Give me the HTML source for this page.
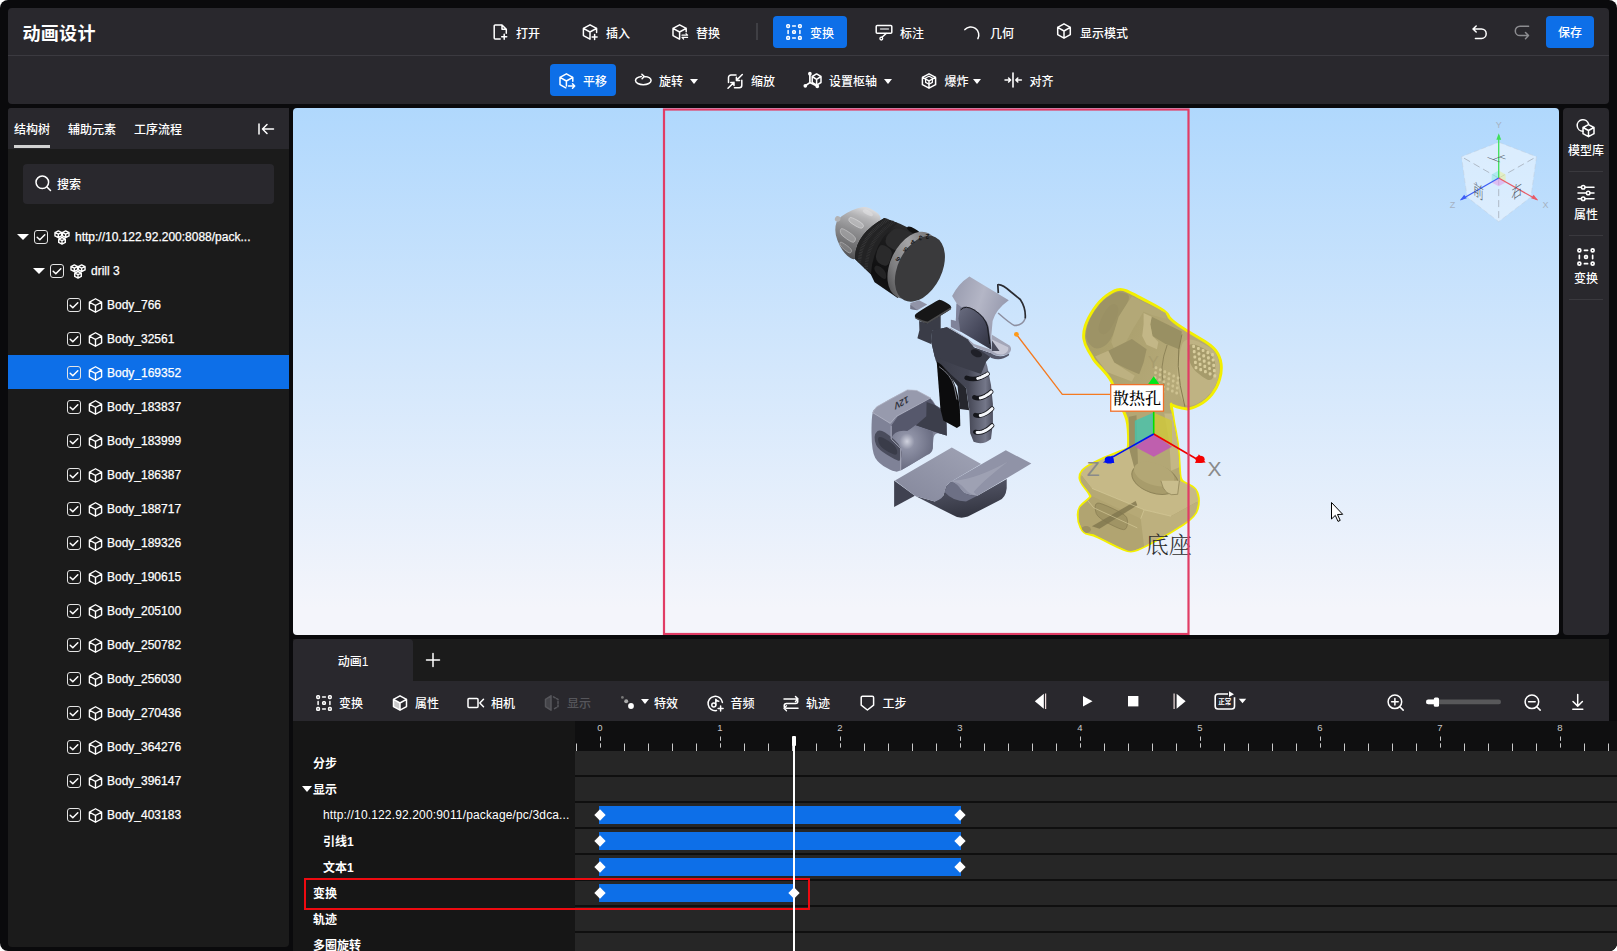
<!DOCTYPE html>
<html lang="zh-CN">
<head>
<meta charset="utf-8">
<title>动画设计</title>
<style>
*{box-sizing:border-box;margin:0;padding:0}
html,body{width:1617px;height:951px;overflow:hidden;background:#fff}
body{font-family:"Liberation Sans","Noto Sans CJK SC",sans-serif;font-size:12px;color:#fff;position:relative;font-weight:500}
.abs{position:absolute}
#frame{position:absolute;left:0;top:0;width:1617px;height:951px;background:#0a0a0c;border-radius:8px;overflow:hidden}
#hdr{position:absolute;left:8px;top:8px;width:1601px;height:96px;background:#29282d;border-radius:4px}
#hdr .sep{position:absolute;left:0;top:47px;width:100%;height:1px;background:#3b3a40}
#title{position:absolute;left:14.500px;top:11.500px;font-size:18px;font-weight:bold;line-height:28px;letter-spacing:.3px}
.tb{position:absolute;height:32px;line-height:32px;font-size:12px;white-space:nowrap;border-radius:4px}
.tb svg{position:absolute;left:0;top:0}
.tb span{position:absolute;top:1.500px}
.blue{background:#0d6fe8}
.caret{position:absolute;top:14.500px;width:0;height:0;border-left:4px solid transparent;border-right:4px solid transparent;border-top:5px solid #fff}
svg{overflow:visible}
.ic{fill:none;stroke:#fff;stroke-width:1.5;stroke-linecap:round;stroke-linejoin:round}
/* left */
#left{position:absolute;left:8px;top:108px;width:281px;height:839px;background:#1b1b1b;border-radius:3px 0 4px 4px;overflow:hidden}
#ltabs{position:absolute;left:0;top:0;width:100%;height:41px;background:#29282d}
#ltabs span{position:absolute;top:0;line-height:44px;font-size:12px}
#search{position:absolute;left:15px;top:56px;width:251px;height:40px;background:#29282d;border-radius:4px}
.row{position:absolute;left:0;width:281px;height:34px;line-height:34px;font-size:12px}
.row.sel{background:#0d6fe8}
.row span{position:absolute;top:1px;-webkit-text-stroke:.25px #fff}
.row svg{position:absolute}
.cb{position:absolute;top:10.500px;width:14px;height:14px;border:1.100px solid #e4e4e4;border-radius:3px}
.cb svg{left:-1px;top:-1px}
.tri{position:absolute;top:15px;width:0;height:0;border-left:6px solid transparent;border-right:6px solid transparent;border-top:6.500px solid #fff}
/* viewport */
#vp{position:absolute;left:293px;top:108px;width:1266px;height:527px;border-radius:4px;overflow:hidden;background:linear-gradient(#b0d8fd 0%,#f4f5fb 95%)}
#right{position:absolute;left:1563px;top:108px;width:46px;height:527px;background:#29282d;border-radius:4px}
/* timeline */
#tl{position:absolute;left:293px;top:639px;width:1324px;height:312px}
#tltabs{position:absolute;left:0;top:0;width:1316px;height:42px;background:#1b1b1b}
#tltab1{position:absolute;left:0;top:0;width:120px;height:42px;background:#29282d;border-radius:4px 4px 0 0;line-height:46px;text-align:center;font-size:12px}
#tlbar{position:absolute;left:0;top:42px;width:1316px;height:40px;background:#29282d}
#ruler{position:absolute;left:282px;top:82px;width:1042px;height:30px;background:#0f0f10}
.trk{position:absolute;left:282px;width:1042px;height:24px;background:#262626}
.lbl{position:absolute;font-size:12px;line-height:30.500px;white-space:nowrap;font-weight:bold}
.bar{position:absolute;height:18px;background:#0d6fe8}

.rl{position:absolute;left:0;width:46px;text-align:center;font-size:12px;line-height:20px}
.rs{position:absolute;left:6px;width:34px;height:1px;background:#3a393e}
.ti{position:absolute;top:0;height:40px;line-height:46px;font-size:12px;white-space:nowrap}
.ti svg{position:absolute;left:0;top:13.500px}
.ti span{position:absolute;top:0}
.lbl.sub{font-weight:bold}
.lbl.en{font-weight:normal;letter-spacing:.15px;line-height:28px}
.tri2{position:absolute;width:0;height:0;border-left:5.500px solid transparent;border-right:5.500px solid transparent;border-top:6px solid #fff}
.dm{position:absolute;width:8px;height:8px;background:#fff;transform:rotate(45deg)}
</style>
</head>
<body>
<div id="frame">
<div id="hdr"><div class="sep"></div><div id="title">动画设计</div>
<!-- top toolbar (coords relative to hdr: subtract 8) -->
<div class="tb" style="left:476px;top:8px;width:68px"><svg width="16" height="16" viewBox="0 0 16 16" style="left:9px;top:8px" class="ic"><path d="M7.2 15H2.2a1 1 0 0 1-1-1V2a1 1 0 0 1 1-1H9l4.3 4.3V9.2M9 1v4.3h4.3M11.2 10.2v5M8.7 12.7h5"/></svg><span style="left:32px">打开</span></div>
<div class="tb" style="left:566px;top:8px;width:68px"><svg width="16" height="16" viewBox="0 0 16 16" style="left:8px;top:8px" class="ic"><path d="M8 15.2L1.4 11.6V4.4L8 .8l6.6 3.6v4.2M1.4 4.4L8 8l6.6-3.600M8 8v7.200M12.600 10.400v5M10.100 12.900h5"/></svg><span style="left:32px">插入</span></div>
<div class="tb" style="left:656px;top:8px;width:68px"><svg width="16" height="16" viewBox="0 0 16 16" style="left:8px;top:8px" class="ic"><path d="M7.400 15.200L1 11.600V4.400L7.600 .8l6.600 3.600v3.400M1 4.400L7.600 8l6.600-3.600M7.600 8v7"/><path d="M10 11.200h5.600l-1.600-1.600M15.600 13.400H10l1.600 1.600" stroke-width="1.200"/></svg><span style="left:32px">替换</span></div>
<div class="abs" style="left:748px;top:15px;width:2px;height:17px;background:#3f3f44"></div>
<div class="tb blue" style="left:765px;top:8px;width:74px"><svg width="16" height="16" viewBox="0 0 16 16" style="left:13px;top:8px" class="ic" stroke-width="1.400"><rect x=".8" y=".8" width="2.600" height="2.600" rx=".8"/><rect x="12.600" y=".8" width="2.600" height="2.600" rx=".8"/><rect x=".8" y="12.600" width="2.600" height="2.600" rx=".8"/><rect x="12.600" y="12.600" width="2.600" height="2.600" rx=".8"/><rect x="6.700" y="6.700" width="2.600" height="2.600" rx=".8"/><path d="M6.600 2.100h2.800M6.600 13.900h2.800M2.100 6.600v2.800M13.900 6.600v2.800"/></svg><span style="left:37px">变换</span></div>
<div class="tb" style="left:860px;top:8px;width:68px"><svg width="18" height="16" viewBox="0 0 18 16" style="left:7px;top:8px" class="ic"><rect x="1.200" y="1.500" width="15.600" height="7.700" rx="1"/><path d="M5.500 5h8" stroke="#c4c4c6" stroke-width="1.300"/><path d="M11.200 9.500L7 13.300"/><circle cx="6.300" cy="14.600" r="1.400" stroke-width="1.300"/></svg><span style="left:32px">标注</span></div>
<div class="tb" style="left:950px;top:8px;width:68px"><svg width="16" height="16" viewBox="0 0 16 16" style="left:6px;top:8px" class="ic"><path d="M.9 5.600A8 8 0 0 1 13.900 14.700"/></svg><span style="left:32px">几何</span></div>
<div class="tb" style="left:1040px;top:8px;width:92px"><svg width="16" height="16" viewBox="0 0 16 16" style="left:8px;top:7px" class="ic"><path d="M8 15.200L1.700 11.600V4.400L8 .8l6.300 3.600v7.200zM1.700 4.400L8 8l6.300-3.600M8 8v7.200"/></svg><span style="left:32px">显示模式</span></div>
<svg class="abs ic" width="16" height="16" viewBox="0 0 16 16" style="left:1464px;top:17px" stroke-width="1.600"><path d="M4.200 1L1 4l3.200 3M1.200 4h8.300a4.700 4.700 0 0 1 0 9.400H3.400"/></svg>
<svg class="abs ic" width="16" height="16" viewBox="0 0 16 16" style="left:1506px;top:17px;stroke:#8c8c90" stroke-width="1.400"><path d="M14.600 1.200H6a4.700 4.700 0 0 0 0 9.400h8.300M11.500 7.500l3 3.100-3 3.100"/></svg>
<div class="tb blue" style="left:1538px;top:8px;width:48px;text-align:center;font-weight:500;line-height:35.500px">保存</div>
<!-- second toolbar -->
<div class="tb blue" style="left:542px;top:56px;width:66px"><svg width="16" height="16" viewBox="0 0 16 16" style="left:9px;top:8.500px" class="ic"><path d="M6.800 14.800L1 11.600V4.400L7.400 .8l6.400 3.600v3.800M1 4.400L7.400 8l6.400-3.600M7.400 8v5"/><path d="M9.500 13h6M13.500 10.800l2.200 2.200-2.200 2.200"/></svg><span style="left:33px">平移</span></div>
<div class="tb" style="left:617.500px;top:56px;width:80px"><svg width="20" height="16" viewBox="0 0 20 16" style="left:8px;top:8px" class="ic"><path d="M7.300 4.500C3.600 5 1.500 6.600 1.500 8.600c0 2.300 3.500 4.100 7.800 4.100s7.800-1.800 7.800-4.100c0-2.100-2.800-3.700-6.800-4M7.900 2.200l2.200 2.200-2 2.300"/></svg><span style="left:33.500px">旋转</span><i class="caret" style="left:64.800px"></i></div>
<div class="tb" style="left:711px;top:56px;width:60px"><svg width="17" height="18" viewBox="0 0 17 18" style="left:8px;top:8px" class="ic" stroke-width="1.400"><path d="M9 3H4a2.500 2.500 0 0 0-2.500 2.500v5M7.500 15.800h4.800a2.500 2.500 0 0 0 2.500-2.500V8.300M15.300 2.500L9.400 8.400M9.400 5.200v3.200h3.200M1 16.300l6-5.900M3.800 10.400H7v3.200"/></svg><span style="left:32px">缩放</span></div>
<div class="tb" style="left:788px;top:56px;width:100px"><svg width="18" height="16" viewBox="0 0 18 16" style="left:8px;top:8px" class="ic" stroke-width="1.200"><path d="M12.600 1.900L17 4.500v6l-4.400 2.700-4.400-2.700v-6zM8.200 4.500l4.400 2.800L17 4.500M12.600 7.300v5.900"/><path d="M5.900 1.700v8.900L1.300 13.800M5.900 10.600l7.400 3.700" stroke-width="1.700"/><circle cx="1.300" cy="13.800" r="1.100" fill="#fff"/><circle cx="13.300" cy="14.300" r="1.100" fill="#fff"/><circle cx="5.900" cy="1.700" r="1.100" fill="#fff"/></svg><span style="left:33px">设置枢轴</span><i class="caret" style="left:87.600px"></i></div>
<div class="tb" style="left:905px;top:56px;width:70px"><svg width="16" height="16" viewBox="0 0 16 16" style="left:8px;top:9px" class="ic"><path d="M8 .8l6.600 3.500v7.400L8 15.200 1.400 11.700V4.300zM1.400 4.300L8 7.800l6.600-3.500M8 7.800v7.400"/><path d="M8 3.200L4.600 5v4.400M8 3.200L11.400 5v4.400M4.600 9.400L8 11.200l3.400-1.800" stroke-width="1.200"/></svg><span style="left:31.500px">爆炸</span><i class="caret" style="left:59.600px"></i></div>
<div class="tb" style="left:992px;top:56px;width:60px"><svg width="18" height="16" viewBox="0 0 18 16" style="left:4px;top:8px" class="ic" stroke-width="1.300"><path d="M9 1v14" stroke-width="1.600"/><path d="M1 8h5.600M4.600 6l2 2-2 2M17.400 8h-5.600M13.800 6l-2 2 2 2"/></svg><span style="left:29.500px">对齐</span></div>
</div>
<div id="left"><div id="ltabs"><span style="left:6px">结构树</span><span style="left:60px">辅助元素</span><span style="left:126px">工序流程</span><div class="abs" style="left:6px;top:37px;width:36px;height:3px;background:#d2d2d2"></div>
<svg class="abs ic" width="16" height="12" viewBox="0 0 16 12" style="left:249.500px;top:15px" stroke-width="1.500"><path d="M1 1v10M4.500 6h11M9 1.500L4.500 6 9 10.500"/></svg></div>
<div id="search"><svg class="abs ic" width="17" height="17" viewBox="0 0 17 17" style="left:11.500px;top:10.800px" stroke-width="1.500"><circle cx="7.300" cy="7.300" r="6.300"/><path d="M12 12l3.500 3.500"/></svg><span class="abs" style="left:34px;top:1px;line-height:40px;font-size:12px">搜索</span></div>
<div class="row" style="top:111px"><i class="tri" style="left:9px"></i><i class="cb" style="left:26px"><svg width="14" height="14" viewBox="0 0 14 14" class="ic" stroke-width="1.100"><path d="M3.200 7.200l2.600 2.500 5-5"/></svg></i><svg width="16" height="15" viewBox="0 0 17 16" style="left:46px;top:10.500px" class="ic" stroke-width="1"><path d="M4.600 1l3.500 1.700v3.600L4.600 8 1 6.300V2.700zM1 2.700l3.600 1.700 3.500-1.700M4.600 4.400V8"/><path d="M12.400 1l3.600 1.700v3.600L12.400 8 8.900 6.300V2.700zM8.900 2.700l3.500 1.700 3.600-1.700M12.400 4.400V8"/><path d="M8.500 8l3.500 1.700v3.600L8.500 15 5 13.300V9.700zM5 9.700l3.500 1.700 3.500-1.700M8.500 11.400V15"/></svg><span style="left:67px">http://10.122.92.200:8088/pack...</span></div>
<div class="row" style="top:145px"><i class="tri" style="left:25px"></i><i class="cb" style="left:42px"><svg width="14" height="14" viewBox="0 0 14 14" class="ic" stroke-width="1.100"><path d="M3.200 7.200l2.600 2.500 5-5"/></svg></i><svg width="16" height="15" viewBox="0 0 17 16" style="left:62px;top:10.500px" class="ic" stroke-width="1"><path d="M4.600 1l3.500 1.700v3.600L4.600 8 1 6.300V2.700zM1 2.700l3.600 1.700 3.500-1.700M4.600 4.400V8"/><path d="M12.400 1l3.600 1.700v3.600L12.400 8 8.900 6.300V2.700zM8.900 2.700l3.500 1.700 3.600-1.700M12.400 4.400V8"/><path d="M8.500 8l3.500 1.700v3.600L8.500 15 5 13.300V9.700zM5 9.700l3.500 1.700 3.500-1.700M8.500 11.400V15"/></svg><span style="left:83px">drill 3</span></div>
<div class="row" style="top:179px"><i class="cb" style="left:59px"><svg width="14" height="14" viewBox="0 0 14 14" class="ic" stroke-width="1.100"><path d="M3.200 7.200l2.600 2.500 5-5"/></svg></i><svg width="15" height="15" viewBox="0 0 16 16" style="left:79.500px;top:10.500px" class="ic" stroke-width="1.100"><path d="M8 15.200L1.500 11.600V4.400L8 .8l6.500 3.600v7.200zM1.500 4.400L8 8l6.500-3.600M8 8v7.200"/></svg><span style="left:99px">Body_766</span></div>
<div class="row" style="top:213px"><i class="cb" style="left:59px"><svg width="14" height="14" viewBox="0 0 14 14" class="ic" stroke-width="1.100"><path d="M3.200 7.200l2.600 2.500 5-5"/></svg></i><svg width="15" height="15" viewBox="0 0 16 16" style="left:79.500px;top:10.500px" class="ic" stroke-width="1.100"><path d="M8 15.200L1.500 11.600V4.400L8 .8l6.500 3.600v7.200zM1.500 4.400L8 8l6.500-3.600M8 8v7.200"/></svg><span style="left:99px">Body_32561</span></div>
<div class="row sel" style="top:247px"><i class="cb" style="left:59px"><svg width="14" height="14" viewBox="0 0 14 14" class="ic" stroke-width="1.100"><path d="M3.200 7.200l2.600 2.500 5-5"/></svg></i><svg width="15" height="15" viewBox="0 0 16 16" style="left:79.500px;top:10.500px" class="ic" stroke-width="1.100"><path d="M8 15.200L1.500 11.600V4.400L8 .8l6.500 3.600v7.200zM1.500 4.400L8 8l6.500-3.600M8 8v7.200"/></svg><span style="left:99px">Body_169352</span></div>
<div class="row" style="top:281px"><i class="cb" style="left:59px"><svg width="14" height="14" viewBox="0 0 14 14" class="ic" stroke-width="1.100"><path d="M3.200 7.200l2.600 2.500 5-5"/></svg></i><svg width="15" height="15" viewBox="0 0 16 16" style="left:79.500px;top:10.500px" class="ic" stroke-width="1.100"><path d="M8 15.200L1.500 11.600V4.400L8 .8l6.500 3.600v7.200zM1.500 4.400L8 8l6.500-3.600M8 8v7.200"/></svg><span style="left:99px">Body_183837</span></div>
<div class="row" style="top:315px"><i class="cb" style="left:59px"><svg width="14" height="14" viewBox="0 0 14 14" class="ic" stroke-width="1.100"><path d="M3.200 7.200l2.600 2.500 5-5"/></svg></i><svg width="15" height="15" viewBox="0 0 16 16" style="left:79.500px;top:10.500px" class="ic" stroke-width="1.100"><path d="M8 15.200L1.500 11.600V4.400L8 .8l6.500 3.600v7.200zM1.500 4.400L8 8l6.500-3.600M8 8v7.200"/></svg><span style="left:99px">Body_183999</span></div>
<div class="row" style="top:349px"><i class="cb" style="left:59px"><svg width="14" height="14" viewBox="0 0 14 14" class="ic" stroke-width="1.100"><path d="M3.200 7.200l2.600 2.500 5-5"/></svg></i><svg width="15" height="15" viewBox="0 0 16 16" style="left:79.500px;top:10.500px" class="ic" stroke-width="1.100"><path d="M8 15.200L1.500 11.600V4.400L8 .8l6.500 3.600v7.200zM1.500 4.400L8 8l6.500-3.600M8 8v7.200"/></svg><span style="left:99px">Body_186387</span></div>
<div class="row" style="top:383px"><i class="cb" style="left:59px"><svg width="14" height="14" viewBox="0 0 14 14" class="ic" stroke-width="1.100"><path d="M3.200 7.200l2.600 2.500 5-5"/></svg></i><svg width="15" height="15" viewBox="0 0 16 16" style="left:79.500px;top:10.500px" class="ic" stroke-width="1.100"><path d="M8 15.200L1.500 11.600V4.400L8 .8l6.500 3.600v7.200zM1.500 4.400L8 8l6.500-3.600M8 8v7.200"/></svg><span style="left:99px">Body_188717</span></div>
<div class="row" style="top:417px"><i class="cb" style="left:59px"><svg width="14" height="14" viewBox="0 0 14 14" class="ic" stroke-width="1.100"><path d="M3.200 7.200l2.600 2.500 5-5"/></svg></i><svg width="15" height="15" viewBox="0 0 16 16" style="left:79.500px;top:10.500px" class="ic" stroke-width="1.100"><path d="M8 15.200L1.500 11.600V4.400L8 .8l6.500 3.600v7.200zM1.500 4.400L8 8l6.500-3.600M8 8v7.200"/></svg><span style="left:99px">Body_189326</span></div>
<div class="row" style="top:451px"><i class="cb" style="left:59px"><svg width="14" height="14" viewBox="0 0 14 14" class="ic" stroke-width="1.100"><path d="M3.200 7.200l2.600 2.500 5-5"/></svg></i><svg width="15" height="15" viewBox="0 0 16 16" style="left:79.500px;top:10.500px" class="ic" stroke-width="1.100"><path d="M8 15.200L1.500 11.600V4.400L8 .8l6.500 3.600v7.200zM1.500 4.400L8 8l6.500-3.600M8 8v7.200"/></svg><span style="left:99px">Body_190615</span></div>
<div class="row" style="top:485px"><i class="cb" style="left:59px"><svg width="14" height="14" viewBox="0 0 14 14" class="ic" stroke-width="1.100"><path d="M3.200 7.200l2.600 2.500 5-5"/></svg></i><svg width="15" height="15" viewBox="0 0 16 16" style="left:79.500px;top:10.500px" class="ic" stroke-width="1.100"><path d="M8 15.200L1.500 11.600V4.400L8 .8l6.500 3.600v7.200zM1.500 4.400L8 8l6.500-3.600M8 8v7.200"/></svg><span style="left:99px">Body_205100</span></div>
<div class="row" style="top:519px"><i class="cb" style="left:59px"><svg width="14" height="14" viewBox="0 0 14 14" class="ic" stroke-width="1.100"><path d="M3.200 7.200l2.600 2.500 5-5"/></svg></i><svg width="15" height="15" viewBox="0 0 16 16" style="left:79.500px;top:10.500px" class="ic" stroke-width="1.100"><path d="M8 15.200L1.500 11.600V4.400L8 .8l6.500 3.600v7.200zM1.500 4.400L8 8l6.500-3.600M8 8v7.200"/></svg><span style="left:99px">Body_250782</span></div>
<div class="row" style="top:553px"><i class="cb" style="left:59px"><svg width="14" height="14" viewBox="0 0 14 14" class="ic" stroke-width="1.100"><path d="M3.200 7.200l2.600 2.500 5-5"/></svg></i><svg width="15" height="15" viewBox="0 0 16 16" style="left:79.500px;top:10.500px" class="ic" stroke-width="1.100"><path d="M8 15.200L1.500 11.600V4.400L8 .8l6.500 3.600v7.200zM1.500 4.400L8 8l6.500-3.600M8 8v7.200"/></svg><span style="left:99px">Body_256030</span></div>
<div class="row" style="top:587px"><i class="cb" style="left:59px"><svg width="14" height="14" viewBox="0 0 14 14" class="ic" stroke-width="1.100"><path d="M3.200 7.200l2.600 2.500 5-5"/></svg></i><svg width="15" height="15" viewBox="0 0 16 16" style="left:79.500px;top:10.500px" class="ic" stroke-width="1.100"><path d="M8 15.200L1.500 11.600V4.400L8 .8l6.500 3.600v7.200zM1.500 4.400L8 8l6.500-3.600M8 8v7.200"/></svg><span style="left:99px">Body_270436</span></div>
<div class="row" style="top:621px"><i class="cb" style="left:59px"><svg width="14" height="14" viewBox="0 0 14 14" class="ic" stroke-width="1.100"><path d="M3.200 7.200l2.600 2.500 5-5"/></svg></i><svg width="15" height="15" viewBox="0 0 16 16" style="left:79.500px;top:10.500px" class="ic" stroke-width="1.100"><path d="M8 15.200L1.500 11.600V4.400L8 .8l6.500 3.600v7.200zM1.500 4.400L8 8l6.500-3.600M8 8v7.200"/></svg><span style="left:99px">Body_364276</span></div>
<div class="row" style="top:655px"><i class="cb" style="left:59px"><svg width="14" height="14" viewBox="0 0 14 14" class="ic" stroke-width="1.100"><path d="M3.200 7.200l2.600 2.500 5-5"/></svg></i><svg width="15" height="15" viewBox="0 0 16 16" style="left:79.500px;top:10.500px" class="ic" stroke-width="1.100"><path d="M8 15.200L1.500 11.600V4.400L8 .8l6.500 3.600v7.200zM1.500 4.400L8 8l6.500-3.600M8 8v7.200"/></svg><span style="left:99px">Body_396147</span></div>
<div class="row" style="top:689px"><i class="cb" style="left:59px"><svg width="14" height="14" viewBox="0 0 14 14" class="ic" stroke-width="1.100"><path d="M3.200 7.200l2.600 2.500 5-5"/></svg></i><svg width="15" height="15" viewBox="0 0 16 16" style="left:79.500px;top:10.500px" class="ic" stroke-width="1.100"><path d="M8 15.200L1.500 11.600V4.400L8 .8l6.500 3.600v7.200zM1.500 4.400L8 8l6.500-3.600M8 8v7.200"/></svg><span style="left:99px">Body_403183</span></div>
</div>
<div id="vp"><!--SCENE--><svg id="scene" width="1266" height="527" viewBox="293 108 1266 527" style="position:absolute;left:0;top:0">
<defs><linearGradient id="gchuck" x1="0.6" y1="0" x2="0.3" y2="1"><stop offset="0" stop-color="#dadadc"/><stop offset=".18" stop-color="#b4b4b6"/><stop offset=".45" stop-color="#909092"/><stop offset=".8" stop-color="#6a6a6c"/><stop offset="1" stop-color="#4c4c4e"/></linearGradient><linearGradient id="gblk" x1="0.7" y1="0" x2="0.2" y2="1"><stop offset="0" stop-color="#303031"/><stop offset=".3" stop-color="#1c1c1d"/><stop offset=".7" stop-color="#0f0f10"/><stop offset="1" stop-color="#1a1a1b"/></linearGradient><linearGradient id="gring" x1="0.7" y1="0" x2="0.2" y2="1"><stop offset="0" stop-color="#6a6a6c"/><stop offset=".4" stop-color="#a4a4a6"/><stop offset=".75" stop-color="#7c7c7e"/><stop offset="1" stop-color="#4a4a4c"/></linearGradient><linearGradient id="gsh" x1="0" y1="0.3" x2="1" y2="0.7"><stop offset="0" stop-color="#9a9db0"/><stop offset=".45" stop-color="#b4b6c6"/><stop offset="1" stop-color="#8e91a6"/></linearGradient><linearGradient id="gshd" x1="0" y1="0" x2="1" y2="1"><stop offset="0" stop-color="#6a6d80"/><stop offset=".6" stop-color="#45475a"/><stop offset="1" stop-color="#2e303c"/></linearGradient><linearGradient id="ggrip" x1="0" y1="0" x2="1" y2="0"><stop offset="0" stop-color="#393b46"/><stop offset=".6" stop-color="#454755"/><stop offset=".88" stop-color="#747789"/><stop offset="1" stop-color="#4c4e5e"/></linearGradient><linearGradient id="gbat" x1="0" y1="0" x2="1" y2="1"><stop offset="0" stop-color="#a6a8ba"/><stop offset=".6" stop-color="#8c8fa3"/><stop offset="1" stop-color="#74778c"/></linearGradient><radialGradient id="gcav" cx=".38" cy=".35" r=".6"><stop offset="0" stop-color="#d0d2de"/><stop offset=".3" stop-color="#8e91a5"/><stop offset="1" stop-color="#6c6f84"/></radialGradient><linearGradient id="gplate" x1="0" y1="1" x2="1" y2="0"><stop offset="0" stop-color="#84879b"/><stop offset="1" stop-color="#a0a3b5"/></linearGradient><linearGradient id="gfront" x1="0" y1="0" x2="0.3" y2="1"><stop offset="0" stop-color="#5c5e70"/><stop offset="1" stop-color="#343642"/></linearGradient><linearGradient id="ghs" x1="0" y1="0" x2="1" y2="1"><stop offset="0" stop-color="#a39966"/><stop offset=".5" stop-color="#b5a978"/><stop offset="1" stop-color="#a89c6a"/></linearGradient><linearGradient id="gbtn" x1="0.3" y1="0" x2="0.6" y2="1"><stop offset="0" stop-color="#1c1c1d"/><stop offset=".75" stop-color="#111112"/><stop offset="1" stop-color="#5c5c5e"/></linearGradient></defs>
<path d="M877.6,224.6 Q884.3,218.0 876.4,212.2 Q868.5,206.5 863.1,207.1 Q857.6,207.7 851.6,210.4 Q845.6,213.1 841.6,216.2 Q837.7,219.2 836.5,222.2 Q835.3,225.2 835.3,230.1 Q835.3,234.9 837.4,240.3 Q839.5,245.8 842.5,250.3 Q845.6,254.9 850.4,258.1 Q855.2,261.3 857.6,255.3 Q860.1,249.4 865.5,240.3 Q870.9,231.3 877.6,224.6Z" fill="url(#gchuck)"/>
<path d="M835.3,220.7 Q834.1,219.2 835.3,217.5 Q836.5,215.8 838.5,216.2 Q840.5,216.5 840.6,218.8 Q840.7,221.0 838.6,221.6 Q836.5,222.2 835.3,220.7Z" fill="#b2b2b4"/>
<path d="M848.9,220.4 Q848.6,218.6 849.8,217.7 Q851.0,216.8 857.0,220.1 Q863.1,223.4 863.4,225.2 Q863.7,227.0 862.2,228.0 Q860.7,228.9 854.9,225.5 Q849.2,222.2 848.9,220.4Z" fill="#c4c4c6" fill-opacity=".55" stroke="#d8d8da" stroke-width=".7"/>
<path d="M840.4,232.5 Q840.1,230.1 841.0,228.9 Q841.9,227.6 848.9,232.2 Q855.8,236.7 855.5,239.1 Q855.2,241.6 853.7,242.2 Q852.2,242.8 846.5,238.8 Q840.7,234.9 840.4,232.5Z" fill="#a8a8aa" fill-opacity=".6" stroke="#c4c4c6" stroke-width=".7"/>
<path d="M840.0,244.6 Q839.5,242.8 840.4,242.2 Q841.3,241.6 846.8,245.5 Q852.2,249.4 851.6,251.2 Q851.0,253.0 849.8,253.0 Q848.6,253.0 844.5,249.7 Q840.5,246.4 840.0,244.6Z" fill="#8a8a8c" fill-opacity=".6" stroke="#b0b0b2" stroke-width=".7"/>
<path d="M863.1,210.1 Q864.9,208.3 869.1,210.7 Q873.4,213.1 872.8,215.3 Q872.2,217.4 866.7,214.6 Q861.3,211.9 863.1,210.1Z" fill="#e2e2e4" opacity=".55"/>
<path d="M884.3,218.0 L900.0,223.8 L923.5,235.3 L916.9,267.6 L897.6,298.0 L874.6,282.3 L870.7,274.2 L855.2,259.3 Q854.0,234.9 884.3,218.0Z" fill="url(#gblk)"/>
<path d="M884.3,218.0 L897.6,223.1 Q873.4,240.9 870.9,274.2 L855.2,259.3 Q854.0,234.9 884.3,218.0Z" fill="#232324"/>
<path d="M887.9,219.8 Q860.1,236.1 859.5,262.7" stroke="#3a3a3b" stroke-width="3.500" stroke-dasharray=".7 .9" fill="none"/>
<path d="M893.9,221.8 Q867.3,238.5 866.1,268.8" stroke="#343435" stroke-width="3.500" stroke-dasharray=".7 .9" fill="none"/>
<path d="M888.2,234.3 Q890.9,231.3 894.2,229.0 Q897.6,226.7 905.7,230.5 Q913.9,234.3 911.8,237.0 Q909.6,239.7 904.8,245.8 Q900.0,251.8 896.9,250.9 Q893.9,250.0 889.7,247.3 Q885.5,244.6 885.5,240.9 Q885.5,237.3 888.2,234.3Z" fill="#2c2c2d"/>
<path d="M876.1,254.9 Q877.0,249.4 879.4,246.4 Q881.8,243.4 887.3,247.0 Q892.7,250.6 891.8,254.3 Q890.9,257.9 889.4,262.1 Q887.9,266.3 884.9,265.7 Q881.8,265.1 878.5,262.7 Q875.2,260.3 876.1,254.9Z" fill="#2a2a2b"/>
<path d="M877.6,274.2 Q873.4,270.0 874.6,266.9 Q875.8,263.9 880.6,266.9 Q885.5,270.0 886.1,274.8 Q886.7,279.6 884.3,279.0 Q881.8,278.4 877.6,274.2Z" fill="#232324"/>
<path d="M907.2,227.3 Q908.4,225.2 915.1,228.9 Q921.7,232.5 919.9,234.3 Q918.1,236.1 912.1,232.8 Q906.0,229.5 907.2,227.3Z" fill="#111"/>
<ellipse cx="912.9" cy="265.1" rx="22.300" ry="35.600" transform="rotate(26.300 912.9 265.1)" fill="url(#gring)"/>
<ellipse cx="919.9" cy="268.8" rx="21.900" ry="35.100" transform="rotate(26.300 919.9 268.8)" fill="#3a3a3c"/>
<text x="0" y="1.800" font-size="6.500" font-weight="bold" fill="#141414" text-anchor="middle" transform="translate(898.2 258.8) rotate(-125)" font-family="Liberation Sans,sans-serif">6</text>
<text x="0" y="1.800" font-size="6.500" font-weight="bold" fill="#141414" text-anchor="middle" transform="translate(905.7 249.1) rotate(-135)" font-family="Liberation Sans,sans-serif">5</text>
<text x="0" y="1.800" font-size="6.500" font-weight="bold" fill="#141414" text-anchor="middle" transform="translate(912.9 241.9) rotate(-148)" font-family="Liberation Sans,sans-serif">4</text>
<text x="0" y="1.800" font-size="6.500" font-weight="bold" fill="#141414" text-anchor="middle" transform="translate(920.5 237.6) rotate(-165)" font-family="Liberation Sans,sans-serif">3</text>
<text x="0" y="1.800" font-size="6.500" font-weight="bold" fill="#141414" text-anchor="middle" transform="translate(927.5 235.6) rotate(-180)" font-family="Liberation Sans,sans-serif">2</text>
<polygon points="894.1,480.6 914.9,495.8 894.1,507.1" fill="#3f4150"/>
<path d="M914.9,495.8 L934.8,501.4 L943.3,495.8 L946.1,486.3 L952.8,480.6 L964.1,492.9 L977.4,495.8 L1006.7,479.1 L1006.7,488.2 Q1005.8,497.6 999.1,500.5 L967.9,516.6 Q959.4,519.4 952.8,515.1 Z" fill="url(#gfront)"/>
<path d="M895.0,480.6 L951.8,447.5 L981.1,464.0 L950.5,481.9 Q945.2,485.3 944.6,492.0 Q943.3,499.5 934.8,501.4 L914.9,495.8 Z" fill="url(#gplate)"/>
<path d="M950.5,481.9 L1005.8,450.3 L1031.3,463.6 L977.4,495.8 Q966.0,495.8 962.2,491.0 Q956.5,482.5 950.5,481.9Z" fill="#9093a7"/>
<path d="M950.5,481.9 Q958.4,480.6 965.1,489.1 Q969.8,494.8 977.4,495.8 L973.6,492.0 Q981.1,482.5 1007.6,461.7 Q977.4,478.7 954.6,480.6Z" fill="#c0c2d0" opacity=".3"/>
<path d="M944.6,492.0 Q946.1,485.3 950.5,481.9 Q957.5,482.5 962.2,491.0 Q966.0,495.8 977.4,495.8 L966.0,501.4 Q952.8,501.4 944.6,492.0Z" fill="#6d7085"/>
<path d="M871.5,432.8 Q871.4,413.4 873.7,410.1 Q876.1,406.8 891.7,398.3 Q907.3,389.8 912.1,390.0 Q916.8,390.3 924.8,395.0 Q932.9,399.6 933.8,402.2 Q934.8,404.9 938.1,406.8 Q941.4,408.7 943.8,411.5 Q946.1,414.4 946.6,425.2 Q947.1,436.1 940.4,433.8 Q933.8,431.4 933.3,439.9 Q932.9,448.4 930.5,451.3 Q928.1,454.1 914.4,462.6 Q900.7,471.1 897.4,471.6 Q894.1,472.1 886.5,467.8 Q878.9,463.6 875.3,457.9 Q871.7,452.2 871.5,432.8Z" fill="#7f8297"/>
<polygon points="872.5,412.5 876.7,406.8 907.3,389.9 916.8,390.5 930.8,398.1 896.0,416.6 890.3,423.4" fill="#979aad" stroke="#b4b6c6" stroke-width=".8"/>
<polygon points="891.2,425.7 897.9,416.3 930.4,398.6 934.8,404.9 941.4,408.7 946.1,414.4 946.7,435.6 933.8,431.4 915.3,425.3 907.3,431.4 900.7,445.6 891.2,439.0" fill="#56586c"/>
<polygon points="926.6,402.1 934.8,404.9 946.1,414.4 946.9,435.7 933.8,431.4 916.0,425.3 926.3,416.3" fill="#3c3e4b"/>
<path d="M891.2,438.6 Q894.1,429.5 907.3,431.0 L915.8,425.7 L932.9,431.4 L932.9,448.4 Q931.9,453.2 927.2,455.1 L900.7,470.6 L900.7,448.4 Z" fill="url(#gcav)"/>
<path d="M874.6,437.1 Q874.8,433.3 877.3,431.2 Q879.9,429.1 885.1,432.6 Q890.3,436.1 894.5,439.9 Q898.8,443.7 900.4,447.5 Q902.0,451.3 901.4,456.3 Q900.7,461.3 898.3,460.7 Q896.0,460.2 887.0,454.8 Q878.0,449.4 876.2,445.1 Q874.4,440.9 874.6,437.1Z" fill="#4a4c5c"/>
<path d="M878.2,440.4 Q877.4,435.2 882.9,437.8 Q888.4,440.5 892.7,444.0 Q896.9,447.5 897.2,451.7 Q897.5,456.0 892.9,454.1 Q888.4,452.2 883.7,448.9 Q878.9,445.6 878.2,440.4Z" fill="#3a3c49"/>
<path d="M891.2,425.7 L891.2,439.0 L900.7,448.4 L900.7,470.6" stroke="#a9acbd" stroke-width="1" fill="none"/>
<text x="0" y="0" font-size="9" font-weight="bold" fill="#30323c" text-anchor="middle" transform="translate(900.9 399.6) rotate(152) skewX(-20)" font-family="Liberation Sans,sans-serif">12V</text>
<polygon points="910.4,303.0 919.1,300.3 927.2,304.5 917.4,310.3 910.4,308.9" fill="#9194a8"/>
<polygon points="910.4,304.7 917.4,310.3 910.4,308.9" fill="#74778b"/>
<polygon points="919.1,320.9 927.2,323.2 940.7,315.5 940.7,330.2 932.2,330.4 931.0,344.0 917.4,338.3 919.4,330.2" fill="#3a3c47"/>
<path d="M932.2,330.4 L946.9,327.3 L968.3,339.4 L974.0,347.5 L992.6,353.9 L986.2,361.4 L983.0,353.8 L987.2,366.1 L991.0,385.0 L992.9,403.9 L992.9,422.9 L991.0,439.0 Q983.0,445.6 973.6,441.8 L970.2,433.3 L969.2,408.7 L966.0,387.9 L939.9,368.9 L935.7,360.4 L934.7,356.8 L931.2,341.7Z" fill="url(#ggrip)"/>
<path d="M932.2,330.4 L946.9,327.3 L968.3,339.4 L974.0,347.5 L992.6,353.9 L986.2,361.4 L981.0,374.1 L957.9,366.0 L934.7,356.8 L931.2,341.7Z" fill="#3b3d49"/>
<ellipse cx="976.4" cy="353.3" rx="6" ry="3.500" fill="#0a0a0c" opacity=".55" transform="rotate(25 976.4 353.3)"/>
<path d="M936.7,361.4 L940.4,408.7 L943.3,420.4 L956.9,428.0 L960.3,425.7 L959.8,406.8 Q957.5,386.0 949.0,372.7 L941.4,364.8Z" fill="#0c0c0d"/>
<path d="M939.1,366.7 Q950.9,374.6 954.1,386.0 L956.9,399.6" stroke="#8a8c98" stroke-width=".9" fill="none"/>
<polygon points="941.4,364.8 949.0,372.7 966.0,387.9 969.2,410.2 959.8,409.1 957.5,386.0" fill="#25262d"/>
<path d="M966.6,377.8 Q976.1,381.5 987.6,373.9" stroke="#16171c" stroke-width="4.600" stroke-linecap="round" fill="none"/>
<path d="M977.7,378.4 L978.9,378.1 L980.1,377.7 L981.3,377.3 L982.5,376.7 L983.8,376.1 L985.0,375.4 L986.3,374.7 L987.6,373.9" stroke="#f6f8fc" stroke-width="3" stroke-linecap="round" fill="none"/>
<path d="M974.3,397.3 Q981.8,400.3 991.2,391.8" stroke="#16171c" stroke-width="4.600" stroke-linecap="round" fill="none"/>
<path d="M980.3,397.9 L981.6,397.6 L982.9,397.2 L984.2,396.7 L985.5,396.0 L986.9,395.1 L988.3,394.2 L989.7,393.1 L991.2,391.8" stroke="#f6f8fc" stroke-width="3" stroke-linecap="round" fill="none"/>
<path d="M975.3,415.1 Q982.8,417.6 992.1,408.7" stroke="#16171c" stroke-width="4.600" stroke-linecap="round" fill="none"/>
<path d="M980.3,415.5 L981.6,415.2 L983.1,414.8 L984.5,414.2 L986.0,413.4 L987.5,412.5 L989.0,411.4 L990.5,410.1 L992.1,408.7" stroke="#f6f8fc" stroke-width="3" stroke-linecap="round" fill="none"/>
<path d="M975.3,432.0 Q982.8,434.4 992.1,425.5" stroke="#16171c" stroke-width="4.600" stroke-linecap="round" fill="none"/>
<path d="M977.1,432.4 L978.8,432.5 L980.6,432.3 L982.4,431.9 L984.2,431.2 L986.1,430.2 L988.1,428.9 L990.1,427.3 L992.1,425.5" stroke="#f6f8fc" stroke-width="3" stroke-linecap="round" fill="none"/>
<path d="M952.1,296.0 Q957.9,283.9 969.4,276.4 L1008.8,300.3 Q996.0,309.3 992.6,320.9 L991.4,334.8 L991.4,349.8 L960.2,331.3 L950.9,326.7 L950.9,319.8 L955.8,320.9 L956.7,303.6Z" fill="url(#gsh)"/>
<polygon points="956.5,303.6 961.3,307.0 959.0,318.6 960.7,331.9 950.9,326.9 950.9,319.8 955.8,320.9" fill="#80839a"/>
<path d="M960.2,308.2 Q964.8,304.1 974.0,309.3 Q985.6,316.3 988.5,326.7 L991.6,349.8 L960.2,331.3 L958.4,318.6Z" fill="url(#gshd)"/>
<path d="M960.7,309.9 Q965.4,304.7 974.0,309.9 Q985.0,316.9 987.4,326.7 L989.7,344.0" stroke="#15161b" stroke-width=".9" fill="none"/>
<path d="M946.9,327.3 L950.0,328.8 L967.7,339.2 Q971.7,346.4 978.7,348.7 L992.6,353.9 Q1000.7,357.9 1008.8,353.5 Q1012.8,349.8 1009.9,345.8 L992.0,334.8 L991.4,349.8 L974.0,344.0 L966.5,337.7 L950.9,327.9Z" fill="#a3a6b8"/>
<path d="M992.0,339.4 L1008.2,347.3 Q1009.3,351.6 1004.1,353.9 Q998.3,355.8 992.0,351.0Z" fill="#c6c8d6"/>
<path d="M992.0,340.6 L999.5,351.0 L992.0,351.0Z" fill="#4a4c5c"/>
<path d="M979.8,349.8 L992.6,354.2 Q1000.7,358.5 1009.3,353.5 L1008.8,355.6 Q1000.7,361.4 991.4,357.9Z" fill="#55586a"/>
<path d="M998.3,293.1 L997.8,284.8 Q1001.8,283.9 1011.1,292.0 L1020.3,299.5 Q1026.1,308.2 1025.2,318.6" stroke="#2a2b31" stroke-width="1.700" fill="none" stroke-linejoin="round"/>
<path d="M1025.2,318.6 Q1022.6,325.5 1014.5,325.5 Q1011.1,324.4 998.1,313.0" stroke="#8d8fa0" stroke-width="1.500" fill="none"/>
<path d="M915.0,316.9 Q914.5,315.4 915.3,314.4 Q916.2,313.4 927.2,306.6 Q938.2,299.9 939.3,299.7 Q940.5,299.5 945.1,302.0 Q949.8,304.5 950.7,306.0 Q951.7,307.6 951.0,308.8 Q950.3,309.9 939.3,316.5 Q928.3,323.0 927.2,323.2 Q926.0,323.5 920.8,320.9 Q915.6,318.4 915.0,316.9Z" fill="#161617"/>
<path d="M914.8,316.9 Q926.6,322.1 927.8,321.5 L951.1,307.3 L950.9,309.3 L928.0,323.2 Q925.5,323.8 915.3,318.4Z" fill="#4c4c4e"/>
<path d="M1117.9,396.7 Q1112.7,383.1 1109.8,378.7 Q1106.8,374.3 1100.6,367.6 Q1094.3,361.0 1093.2,358.8 Q1092.1,356.6 1088.4,350.7 Q1084.7,344.8 1083.8,338.9 Q1083.0,333.0 1085.3,325.7 Q1087.7,318.3 1093.6,309.5 Q1099.5,300.6 1106.1,295.8 Q1112.7,291.0 1117.1,289.8 Q1121.5,288.5 1126.7,290.9 Q1131.9,293.3 1149.5,302.5 Q1167.2,311.7 1168.1,315.1 Q1169.0,318.6 1178.4,325.1 Q1187.8,331.5 1199.6,338.2 Q1211.4,344.8 1215.8,350.7 Q1220.2,356.6 1221.1,363.9 Q1222.0,371.3 1219.6,379.4 Q1217.3,387.5 1212.1,394.1 Q1207.0,400.8 1198.9,405.0 Q1190.8,409.3 1186.3,408.9 Q1181.9,408.4 1176.8,406.8 Q1171.6,405.2 1171.3,404.2 Q1171.0,403.1 1172.3,412.5 Q1173.5,421.9 1175.6,432.0 Q1177.7,442.1 1178.6,454.7 Q1179.4,467.3 1179.8,474.1 Q1180.3,480.8 1184.1,482.5 Q1187.8,484.2 1192.1,486.7 Q1196.3,489.2 1197.8,495.1 Q1199.3,501.0 1197.4,508.6 Q1195.4,516.2 1183.2,524.2 Q1171.0,532.2 1157.5,539.5 Q1144.1,546.8 1137.3,549.6 Q1130.6,552.4 1123.9,549.4 Q1117.1,546.5 1110.4,543.1 Q1103.7,539.7 1098.6,537.2 Q1093.6,534.7 1088.5,533.8 Q1083.5,533.0 1080.8,527.1 Q1078.1,521.2 1078.2,514.5 Q1078.4,507.7 1083.0,504.0 Q1087.7,500.2 1089.8,498.1 Q1091.9,496.0 1086.0,488.8 Q1080.1,481.6 1079.9,477.9 Q1079.8,474.1 1082.5,470.7 Q1085.2,467.3 1094.4,462.7 Q1103.7,458.1 1114.6,453.9 Q1125.6,449.7 1127.2,449.2 Q1128.9,448.8 1128.5,435.4 Q1128.1,421.9 1125.6,416.1 Q1123.1,410.4 1117.9,396.7Z" fill="url(#ghs)" stroke="#f3ef00" stroke-width="2.900" stroke-linejoin="round"/>
<clipPath id="hclip"><path d="M1117.9,396.7 Q1112.7,383.1 1109.8,378.7 Q1106.8,374.3 1100.6,367.6 Q1094.3,361.0 1093.2,358.8 Q1092.1,356.6 1088.4,350.7 Q1084.7,344.8 1083.8,338.9 Q1083.0,333.0 1085.3,325.7 Q1087.7,318.3 1093.6,309.5 Q1099.5,300.6 1106.1,295.8 Q1112.7,291.0 1117.1,289.8 Q1121.5,288.5 1126.7,290.9 Q1131.9,293.3 1149.5,302.5 Q1167.2,311.7 1168.1,315.1 Q1169.0,318.6 1178.4,325.1 Q1187.8,331.5 1199.6,338.2 Q1211.4,344.8 1215.8,350.7 Q1220.2,356.6 1221.1,363.9 Q1222.0,371.3 1219.6,379.4 Q1217.3,387.5 1212.1,394.1 Q1207.0,400.8 1198.9,405.0 Q1190.8,409.3 1186.3,408.9 Q1181.9,408.4 1176.8,406.8 Q1171.6,405.2 1171.3,404.2 Q1171.0,403.1 1172.3,412.5 Q1173.5,421.9 1175.6,432.0 Q1177.7,442.1 1178.6,454.7 Q1179.4,467.3 1179.8,474.1 Q1180.3,480.8 1184.1,482.5 Q1187.8,484.2 1192.1,486.7 Q1196.3,489.2 1197.8,495.1 Q1199.3,501.0 1197.4,508.6 Q1195.4,516.2 1183.2,524.2 Q1171.0,532.2 1157.5,539.5 Q1144.1,546.8 1137.3,549.6 Q1130.6,552.4 1123.9,549.4 Q1117.1,546.5 1110.4,543.1 Q1103.7,539.7 1098.6,537.2 Q1093.6,534.7 1088.5,533.8 Q1083.5,533.0 1080.8,527.1 Q1078.1,521.2 1078.2,514.5 Q1078.4,507.7 1083.0,504.0 Q1087.7,500.2 1089.8,498.1 Q1091.9,496.0 1086.0,488.8 Q1080.1,481.6 1079.9,477.9 Q1079.8,474.1 1082.5,470.7 Q1085.2,467.3 1094.4,462.7 Q1103.7,458.1 1114.6,453.9 Q1125.6,449.7 1127.2,449.2 Q1128.9,448.8 1128.5,435.4 Q1128.1,421.9 1125.6,416.1 Q1123.1,410.4 1117.9,396.7Z"/></clipPath><g clip-path="url(#hclip)">
<path d="M1106.5,298.0 Q1112.7,293.3 1117.1,292.4 Q1121.5,291.5 1126.7,293.8 Q1131.9,296.2 1125.2,306.5 Q1118.6,316.8 1114.9,329.3 Q1111.2,341.9 1103.9,346.3 Q1096.5,350.7 1091.7,346.3 Q1086.9,341.9 1086.2,336.7 Q1085.5,331.5 1087.7,324.9 Q1089.9,318.3 1095.0,310.6 Q1100.2,302.8 1106.5,298.0Z" fill="#9d9366"/>
<path d="M1100.9,319.8 Q1105.3,309.5 1109.8,305.8 Q1114.2,302.1 1117.1,305.8 Q1120.1,309.5 1115.7,319.0 Q1111.2,328.6 1107.6,332.3 Q1103.9,336.0 1100.2,333.0 Q1096.5,330.1 1100.9,319.8Z" fill="#9a9064"/>
<polygon points="1131.9,296.2 1165.7,313.1 1166.5,319.0 1152.5,315.3 1143.6,311.7 1133.3,328.6 1126.0,341.9 1114.2,349.2 1111.2,341.9 1118.6,316.8" fill="#b3a877"/>
<polygon points="1151.7,316.8 1181.9,331.5 1179.0,349.2 1164.3,343.3 1152.5,336.0 1150.3,324.2" fill="#999063"/>
<polygon points="1143.6,313.1 1151.7,316.8 1150.3,324.2 1152.5,336.0 1158.4,341.9 1156.9,349.2 1146.6,344.8 1142.2,336.0 1143.6,324.2" fill="#c3b787"/>
<polygon points="1108.3,350.7 1131.9,338.9 1146.6,349.2 1143.6,362.5 1139.2,374.3 1126.0,368.4 1114.2,362.5" fill="#9a9064"/>
<polygon points="1095.0,356.6 1108.3,350.7 1114.2,362.5 1134.8,375.7 1131.9,381.6 1112.7,374.3 1106.8,372.0" fill="#bdb181"/>
<path d="M1181.9,344.8 Q1184.9,336.0 1198.1,341.5 Q1211.4,347.0 1215.1,352.5 Q1218.7,358.1 1219.5,364.7 Q1220.2,371.3 1218.0,378.7 Q1215.8,386.0 1211.4,391.9 Q1207.0,397.8 1199.6,402.2 Q1192.2,406.7 1187.8,405.9 Q1183.4,405.2 1179.7,394.1 Q1176.0,383.1 1177.5,368.4 Q1179.0,353.6 1181.9,344.8Z" fill="#bfb383"/>
<path d="M1187.8,349.2 Q1187.8,341.9 1197.4,345.5 Q1207.0,349.2 1211.0,354.4 Q1215.1,359.5 1215.4,365.4 Q1215.8,371.3 1213.6,376.5 Q1211.4,381.6 1207.0,379.4 Q1202.5,377.2 1197.4,372.8 Q1192.2,368.4 1190.0,362.5 Q1187.8,356.6 1187.8,349.2Z" fill="#a69b6b"/>
<path d="M1181.9,334.5 Q1173.1,362.5 1184.9,406.7" stroke="#857b50" stroke-width="1" fill="none"/>
<path d="M1167.2,344.8 Q1158.4,368.4 1164.3,386.0" stroke="#857b50" stroke-width=".8" fill="none"/>
<rect x="1192.2" y="344.8" width="2.800" height="3.200" rx="1" fill="#d8cd9c"/>
<rect x="1192.8" y="350.1" width="2.800" height="3.200" rx="1" fill="#d8cd9c"/>
<rect x="1193.4" y="355.4" width="2.800" height="3.200" rx="1" fill="#d8cd9c"/>
<rect x="1194.0" y="360.7" width="2.800" height="3.200" rx="1" fill="#d8cd9c"/>
<rect x="1194.6" y="366.0" width="2.800" height="3.200" rx="1" fill="#d8cd9c"/>
<rect x="1197.0" y="346.9" width="2.800" height="3.200" rx="1" fill="#d8cd9c"/>
<rect x="1197.5" y="352.2" width="2.800" height="3.200" rx="1" fill="#d8cd9c"/>
<rect x="1198.1" y="357.5" width="2.800" height="3.200" rx="1" fill="#d8cd9c"/>
<rect x="1198.7" y="362.8" width="2.800" height="3.200" rx="1" fill="#d8cd9c"/>
<rect x="1199.3" y="368.1" width="2.800" height="3.200" rx="1" fill="#d8cd9c"/>
<rect x="1201.7" y="348.9" width="2.800" height="3.200" rx="1" fill="#d8cd9c"/>
<rect x="1202.3" y="354.2" width="2.800" height="3.200" rx="1" fill="#d8cd9c"/>
<rect x="1202.8" y="359.5" width="2.800" height="3.200" rx="1" fill="#d8cd9c"/>
<rect x="1203.4" y="364.8" width="2.800" height="3.200" rx="1" fill="#d8cd9c"/>
<rect x="1204.0" y="370.1" width="2.800" height="3.200" rx="1" fill="#d8cd9c"/>
<rect x="1206.4" y="351.0" width="2.800" height="3.200" rx="1" fill="#d8cd9c"/>
<rect x="1207.0" y="356.3" width="2.800" height="3.200" rx="1" fill="#d8cd9c"/>
<rect x="1207.6" y="361.6" width="2.800" height="3.200" rx="1" fill="#d8cd9c"/>
<rect x="1208.1" y="366.9" width="2.800" height="3.200" rx="1" fill="#d8cd9c"/>
<rect x="1208.7" y="372.2" width="2.800" height="3.200" rx="1" fill="#d8cd9c"/>
<rect x="1211.1" y="353.0" width="2.800" height="3.200" rx="1" fill="#d8cd9c"/>
<rect x="1211.7" y="358.4" width="2.800" height="3.200" rx="1" fill="#d8cd9c"/>
<rect x="1212.3" y="363.7" width="2.800" height="3.200" rx="1" fill="#d8cd9c"/>
<rect x="1212.9" y="369.0" width="2.800" height="3.200" rx="1" fill="#d8cd9c"/>
<rect x="1213.4" y="374.3" width="2.800" height="3.200" rx="1" fill="#d8cd9c"/>
<rect x="1154.7" y="366.2" width="2.600" height="3" rx="1" fill="#cfc392"/>
<rect x="1154.2" y="371.2" width="2.600" height="3" rx="1" fill="#cfc392"/>
<rect x="1153.8" y="376.2" width="2.600" height="3" rx="1" fill="#cfc392"/>
<rect x="1153.4" y="381.2" width="2.600" height="3" rx="1" fill="#cfc392"/>
<rect x="1152.9" y="386.2" width="2.600" height="3" rx="1" fill="#cfc392"/>
<rect x="1159.1" y="368.2" width="2.600" height="3" rx="1" fill="#cfc392"/>
<rect x="1158.7" y="373.2" width="2.600" height="3" rx="1" fill="#cfc392"/>
<rect x="1158.2" y="378.2" width="2.600" height="3" rx="1" fill="#cfc392"/>
<rect x="1157.8" y="383.2" width="2.600" height="3" rx="1" fill="#cfc392"/>
<rect x="1157.3" y="388.2" width="2.600" height="3" rx="1" fill="#cfc392"/>
<rect x="1163.5" y="370.3" width="2.600" height="3" rx="1" fill="#cfc392"/>
<rect x="1163.1" y="375.3" width="2.600" height="3" rx="1" fill="#cfc392"/>
<rect x="1162.6" y="380.3" width="2.600" height="3" rx="1" fill="#cfc392"/>
<rect x="1162.2" y="385.3" width="2.600" height="3" rx="1" fill="#cfc392"/>
<rect x="1161.8" y="390.3" width="2.600" height="3" rx="1" fill="#cfc392"/>
<rect x="1167.9" y="372.3" width="2.600" height="3" rx="1" fill="#cfc392"/>
<rect x="1167.5" y="377.3" width="2.600" height="3" rx="1" fill="#cfc392"/>
<rect x="1167.1" y="382.4" width="2.600" height="3" rx="1" fill="#cfc392"/>
<rect x="1166.6" y="387.4" width="2.600" height="3" rx="1" fill="#cfc392"/>
<rect x="1172.4" y="374.4" width="2.600" height="3" rx="1" fill="#cfc392"/>
<rect x="1171.9" y="379.4" width="2.600" height="3" rx="1" fill="#cfc392"/>
<rect x="1171.5" y="384.4" width="2.600" height="3" rx="1" fill="#cfc392"/>
<rect x="1171.0" y="389.4" width="2.600" height="3" rx="1" fill="#cfc392"/>
<rect x="1176.8" y="376.5" width="2.600" height="3" rx="1" fill="#cfc392"/>
<rect x="1176.3" y="381.5" width="2.600" height="3" rx="1" fill="#cfc392"/>
<rect x="1175.9" y="386.5" width="2.600" height="3" rx="1" fill="#cfc392"/>
<rect x="1175.4" y="391.5" width="2.600" height="3" rx="1" fill="#cfc392"/>
<polygon points="1128.9,410.1 1171.0,410.1 1173.5,421.9 1177.7,442.1 1179.4,467.3 1180.3,480.8 1164.3,494.3 1137.3,479.1 1129.3,448.8 1128.6,421.9" fill="#b3a775"/>
<polygon points="1128.9,416.8 1136.5,415.2 1138.2,472.4 1131.4,476.6 1129.3,448.8" fill="#9a8f62"/>
<polygon points="1164.3,413.5 1171.9,413.5 1177.7,442.1 1179.4,467.3 1171.0,470.7 1169.3,442.1" fill="#c4b786"/>
<polygon points="1080.4,473.7 1085.5,467.7 1103.7,458.6 1125.6,450.2 1129.3,449.2 1137.3,479.1 1164.3,494.3 1180.3,481.1 1187.8,484.5 1195.9,489.6 1198.6,501.0 1171.0,516.2 1144.1,509.8 1091.9,488.4" fill="#c6b987"/>
<ellipse cx="1155.0" cy="479.1" rx="24" ry="14" transform="rotate(18 1155.0 479.1)" fill="#a89c6b" stroke="#8f8458" stroke-width="1"/>
<ellipse cx="1154.2" cy="474.1" rx="21" ry="11" transform="rotate(18 1154.2 474.1)" fill="#b3a775"/>
<path d="M1160.9,480.8 Q1164.3,497.6 1177.7,494.3 L1179.4,480.8" fill="#c9bd8d" stroke="#8f8458" stroke-width=".8"/>
<polygon points="1080.4,474.1 1091.9,488.4 1144.1,509.8 1140.7,518.7 1091.9,496.3 1080.4,481.8" fill="#b6a976"/>
<polygon points="1078.8,508.1 1087.7,500.5 1091.9,496.3 1140.7,518.7 1144.1,546.8 1130.6,551.9 1117.1,546.1 1093.6,534.3 1083.8,532.7 1078.4,521.2" fill="#b1a471"/>
<polygon points="1140.7,518.7 1144.1,509.8 1171.0,516.2 1198.6,501.0 1195.1,516.2 1171.0,531.8 1144.1,546.5" fill="#bdb07e"/>
<path d="M1095.1,506.5 Q1095.3,503.5 1097.8,503.1 Q1100.3,502.7 1112.9,508.6 Q1125.6,514.5 1126.8,517.8 Q1128.1,521.2 1127.2,525.4 Q1126.4,529.6 1123.5,529.6 Q1120.5,529.6 1109.1,523.7 Q1097.8,517.8 1096.3,513.6 Q1094.9,509.4 1095.1,506.5Z" fill="#a09464" stroke="#8a7f54" stroke-width=".8"/>
<polygon points="1091.9,526.3 1135.7,501.0 1137.3,505.2 1099.5,528.8" fill="#7f754d" opacity=".8"/>
<path d="M1091.9,488.4 L1144.1,509.8 L1171.0,516.2 M1144.1,509.8 L1140.7,518.7 M1087.7,500.5 L1093.6,507.7 L1137.3,527.9" stroke="#d8cc9c" stroke-width=".8" fill="none" opacity=".8"/>
<ellipse cx="1086.0" cy="529.6" rx="5" ry="3.500" fill="#9c9062"/>
</g>
<polygon points="1134.8,420.8 1153.7,412.6 1153.7,434.0 1134.8,446.7" fill="#45c4ae" opacity=".8"/>
<polygon points="1153.7,412.6 1172.0,420.8 1172.0,446.7 1153.7,434.0" fill="#cfc93a" opacity=".8"/>
<polygon points="1153.7,434.0 1172.0,446.7 1153.7,456.8 1134.8,446.7" fill="#c152b8" opacity=".85"/>
<path d="M1153.7,434.0 L1153.7,382.0" stroke="#00e000" stroke-width="1.600"/>
<polygon points="1153.7,376.3 1159.4,384.2 1148.0,384.2" fill="#00e81a"/>
<path d="M1153.7,434.0 L1198.8,460.2" stroke="#f00000" stroke-width="1.600"/>
<polygon points="1205.7,462.4 1195.0,463.1 1198.8,454.2" fill="#f40000"/>
<ellipse cx="1200.1" cy="459.3" rx="4.500" ry="3.600" fill="#f40000"/>
<path d="M1153.7,434.0 L1109.8,458.6" stroke="#0010f0" stroke-width="1.600"/>
<polygon points="1102.9,462.4 1112.4,455.5 1114.3,463.1" fill="#0010f0"/>
<ellipse cx="1109.2" cy="459.9" rx="4.500" ry="3.600" fill="#0010f0"/>
<text x="1093.1" y="475.7" font-size="21" fill="#8a8a8a" text-anchor="middle" font-family="Liberation Sans,sans-serif">Z</text>
<text x="1214.6" y="476.0" font-size="21" fill="#8a8a8a" text-anchor="middle" font-family="Liberation Sans,sans-serif">X</text>
<text x="1153.4" y="368.4" font-size="16" fill="#7d7350" text-anchor="middle" opacity=".18" font-family="Liberation Sans,sans-serif">Y</text>
<text x="1168.8" y="553.3" font-size="23" fill="#2e2e2e" text-anchor="middle" font-family="Noto Serif CJK SC,serif" font-weight="300">底座</text>
<path d="M1016.500,334.500 L1062.300,394.300 L1111,394.300" stroke="#f47a20" stroke-width="1.300" fill="none"/>
<circle cx="1016.400" cy="334.300" r="2.400" fill="#ff9a18"/>
<rect x="1110.700" y="384.600" width="52.800" height="26.600" fill="#fff" stroke="#f0702a" stroke-width="1.300"/>
<text x="1137" y="403.500" font-size="16" fill="#000" text-anchor="middle" font-family="Noto Serif CJK SC,serif">散热孔</text>
<rect x="664" y="109.500" width="524.500" height="524.500" fill="none" stroke="#e13c65" stroke-width="2.200"/>
<polygon points="1498.7,142.2 1536.5,156.7 1530.9,197.1 1498.7,221.7 1467.1,197.1 1461.5,156.7" fill="#fff" opacity=".45"/>
<polygon points="1498.7,142.2 1536.5,156.7 1498.7,178.1 1461.5,156.7" fill="#fff" opacity=".12"/>
<path d="M1498.7,178.1 L1461.5,156.7 M1498.7,178.1 L1536.5,156.7 M1498.7,178.1 L1498.7,221.7" stroke="#aab4c0" stroke-width="1" stroke-dasharray="7 4" fill="none" opacity=".9"/>
<path d="M1498.7,142.2 L1536.5,156.7 L1530.9,197.1 L1498.7,221.7 L1467.1,197.1 L1461.5,156.7 Z" stroke="#c3cedb" stroke-width=".6" stroke-dasharray="5 3" fill="none" opacity=".8"/>
<polygon points="1491.7,174.4 1498.7,170.6 1498.7,178.1 1491.7,182.6" fill="#8fe6e6" opacity=".6"/>
<polygon points="1498.7,170.6 1505.6,174.4 1505.6,182.6 1498.7,178.1" fill="#e6eea0" opacity=".6"/>
<polygon points="1498.7,178.1 1505.6,182.6 1498.7,186.3 1491.7,182.6" fill="#e0a0e8" opacity=".6"/>
<path d="M1498.7,178.1 L1498.7,135.2" stroke="#3fe05a" stroke-width="1.300"/>
<polygon points="1498.7,133.3 1501.2,139.7 1496.4,139.7" fill="#3fe05a"/>
<path d="M1498.7,178.1 L1537.2,199.8" stroke="#e85a66" stroke-width="1.200"/>
<polygon points="1538.2,200.6 1531.1,198.3 1533.6,194.8" fill="#e85a66"/>
<path d="M1498.7,178.1 L1460.8,199.8" stroke="#3c5cf6" stroke-width="1.200"/>
<polygon points="1459.9,200.6 1466.8,198.3 1464.2,194.8" fill="#3c5cf6"/>
<text x="1498.7" y="127.7" font-size="9" fill="#a5b2c2" text-anchor="middle" font-family="Liberation Sans,sans-serif">Y</text>
<text x="1452.6" y="207.8" font-size="9" fill="#a5b2c2" text-anchor="middle" font-family="Liberation Sans,sans-serif">Z</text>
<text x="1545.4" y="207.8" font-size="9" fill="#a5b2c2" text-anchor="middle" font-family="Liberation Sans,sans-serif">X</text>
<text x="0" y="0" font-size="15" fill="#4a5560" text-anchor="middle" transform="translate(1493.6 159.8) matrix(.93 .36 -.93 .36 0 0)" font-family="Noto Sans CJK SC,sans-serif" font-weight="300">上</text>
<text x="0" y="0" font-size="14" fill="#4a5560" text-anchor="middle" transform="translate(1478.5 197.1) matrix(.75 .5 0 1.150 0 0)" font-family="Noto Sans CJK SC,sans-serif" font-weight="300">前</text>
<text x="0" y="0" font-size="14" fill="#4a5560" text-anchor="middle" transform="translate(1516.7 197.1) matrix(.75 -.5 0 1.150 0 0)" font-family="Noto Sans CJK SC,sans-serif" font-weight="300">右</text>
<path d="M1331.500,502.500 v16.500 l3.800,-3.600 l2.700,6 l2.200,-1 l-2.700,-5.900 l5.200,-.2 z" fill="#fff" stroke="#000" stroke-width="1" stroke-linejoin="round"/>
</svg><!--/SCENE--></div>
<div id="right">
<svg class="abs ic" width="20" height="20" viewBox="0 0 20 20" style="left:13px;top:11px" stroke-width="1.300"><path d="M7 12.300A5.800 5.800 0 1 1 12.600 5"/><path d="M12.500 5.600l5.500 2.900v6.200l-5.500 3-5.500-3V8.500zM7 8.500l5.500 3 5.500-3M12.500 11.500v6.200"/></svg>
<span class="rl" style="top:33px">模型库</span>
<div class="rs" style="top:63px"></div>
<svg class="abs ic" width="18" height="18" viewBox="0 0 18 18" style="left:14px;top:76px" stroke-width="1.300"><path d="M1 3.200h3.400M8 3.200h9M1 9h8.400M13 9h4M1 14.800h3.400M8 14.800h9"/><circle cx="6.200" cy="3.200" r="1.800"/><circle cx="11.200" cy="9" r="1.800"/><circle cx="6.200" cy="14.800" r="1.800"/></svg>
<span class="rl" style="top:97px">属性</span>
<div class="rs" style="top:127px"></div>
<svg class="abs ic" width="18" height="18" viewBox="0 0 16 16" style="left:14px;top:140px" stroke-width="1.300"><rect x=".8" y=".8" width="2.600" height="2.600" rx="1.200"/><rect x="12.600" y=".8" width="2.600" height="2.600" rx="1.200"/><rect x=".8" y="12.600" width="2.600" height="2.600" rx="1.200"/><rect x="12.600" y="12.600" width="2.600" height="2.600" rx="1.200"/><rect x="6.700" y="6.700" width="2.600" height="2.600" rx="1.200"/><path d="M6.600 2.100h2.800M6.600 13.900h2.800M2.100 6.600v2.800M13.900 6.600v2.800"/></svg>
<span class="rl" style="top:161px">变换</span>
<div class="rs" style="top:191px"></div>
</div>
<div id="tl"><div id="tltabs"><div id="tltab1">动画1</div><svg class="abs ic" width="14" height="14" viewBox="0 0 14 14" style="left:133px;top:14px" stroke-width="1.300"><path d="M7 .5v13M.5 7h13"/></svg></div><div id="tlbar"><div class="ti" style="left:23px"><svg width="16" height="16" viewBox="0 0 16 16" class="ic" stroke-width="1.400"><rect x=".8" y=".8" width="2.600" height="2.600" rx=".8"/><rect x="12.600" y=".8" width="2.600" height="2.600" rx=".8"/><rect x=".8" y="12.600" width="2.600" height="2.600" rx=".8"/><rect x="12.600" y="12.600" width="2.600" height="2.600" rx=".8"/><rect x="6.700" y="6.700" width="2.600" height="2.600" rx=".8"/><path d="M6.600 2.100h2.800M6.600 13.900h2.800M2.100 6.600v2.800M13.900 6.600v2.800"/></svg><span style="left:23px">变换</span></div>
<div class="ti" style="left:99px"><svg width="16" height="16" viewBox="0 0 16 16" class="ic" stroke-width="1.300"><path d="M8 15.200L1.500 11.600V4.400L8 .8l6.500 3.600v7.200zM1.500 4.400L8 8l6.500-3.600M8 8v7.200"/><path d="M1.500 4.400L8 8v7.200L1.500 11.600z" fill="#fff" fill-opacity=".75" stroke="none"/></svg><span style="left:23px">属性</span></div>
<div class="ti" style="left:174px"><svg width="18" height="16" viewBox="0 0 18 16" class="ic" stroke-width="1.500"><rect x="1" y="3.600" width="10" height="9" rx="1"/><path d="M16.500 4.200L12.800 8l3.700 3.800"/></svg><span style="left:24px">相机</span></div>
<div class="ti" style="left:251px;color:#56565b"><svg width="16" height="16" viewBox="0 0 16 16" class="ic" style="stroke:#56565b" stroke-width="1.300"><path d="M7 15.200L1.500 11.600V4.400L7 .8zM7 .8v14.400" fill="#56565b" fill-opacity=".6"/><path d="M9.500 1.800l4.500 2.600v7.200l-4.500 2.600" stroke-dasharray="2 1.600"/></svg><span style="left:23px">显示</span></div>
<div class="ti" style="left:327px"><svg width="16" height="16" viewBox="0 0 16 16" class="ic"><circle cx="2.400" cy="2.400" r="1.400" fill="#777" stroke="none"/><circle cx="6.200" cy="6.200" r="2" fill="#aaa" stroke="none"/><circle cx="11" cy="11" r="2.900" fill="#fff" stroke="none"/></svg><span style="left:34px">特效</span><i class="caret" style="left:20.500px;top:18px"></i></div>
<div class="ti" style="left:413.5px"><svg width="17" height="17" viewBox="0 0 17 17" class="ic" stroke-width="1.400"><path d="M15.400 7.400A7.200 7.200 0 1 0 9.500 15.600"/><circle cx="6.800" cy="10" r="2"/><path d="M8.800 10V4.200c.5 1.200 1.700 1.900 3 2M13.600 11v5M11.100 13.500h5"/></svg><span style="left:24.0px">音频</span></div>
<div class="ti" style="left:490px"><svg width="16" height="16" viewBox="0 0 16 16" class="ic" stroke-width="1.600"><path d="M1 4h11.500a2.300 2.300 0 0 1 0 4.600H3.500a2.300 2.300 0 0 0 0 4.600H15M12.500 1.500L15 4l-2.500 2.500"/><path d="M3.500 10.700L1 13.200l2.500 2.500" stroke-width="1.300"/></svg><span style="left:23px">轨迹</span></div>
<div class="ti" style="left:567px"><svg width="16" height="16" viewBox="0 0 16 16" class="ic" stroke-width="1.500"><path d="M2.500 1.200h9.800a1.300 1.300 0 0 1 1.300 1.300v7.700L7.400 15 1.200 10.200V2.500a1.300 1.300 0 0 1 1.300-1.300z"/></svg><span style="left:22.5px">工步</span></div></div><svg class="abs" width="600" height="40" viewBox="1020 681 600 40" style="left:727px;top:42px" fill="#fff">
<path d="M1043.800,693.800v15l-9,-7.500z"/><rect x="1045" y="693.500" width="1.200" height="15.500" fill="#f0dede"/>
<path d="M1083,696v10.600l9.500,-5.300z"/>
<rect x="1128" y="696" width="10.400" height="10.400"/>
<rect x="1173.500" y="693.500" width="1.200" height="15.500" fill="#f0dede"/><path d="M1176.600,693.800v15l9,-7.500z"/>
<path d="M1228,694h-10a2.800,2.800 0 0 0 -2.800,2.800v9.400a2.800,2.800 0 0 0 2.800,2.800h13.700a2.800,2.800 0 0 0 2.800,-2.800v-9" fill="none" stroke="#fff" stroke-width="1.600"/><path d="M1229,691.300l5,2.900l-5,2.900z"/>
<text x="1224.800" y="704.300" font-size="6.500" font-weight="bold" text-anchor="middle" font-family="Noto Sans CJK SC,sans-serif">正常</text>
<path d="M1238.800,698.700h7.400l-3.700,4.600z"/>
<g fill="none" stroke="#fff" stroke-width="1.500" stroke-linecap="round"><circle cx="1394.900" cy="701.800" r="6.800"/><path d="M1399.800,706.700l3.400,3.400M1391.600,701.800h6.600M1394.900,698.500v6.600"/>
<circle cx="1531.900" cy="701.800" r="6.800"/><path d="M1536.800,706.700l3.400,3.400M1528.600,701.800h6.600"/>
<path d="M1577.700,694.600v11M1573,701.500l4.700,4.600l4.700,-4.600M1572.800,709.200h10" stroke-linejoin="round"/></g>
<rect x="1426" y="699.600" width="75" height="4.600" rx="2.300" fill="#58585a"/><rect x="1426" y="699.600" width="10" height="4.600" rx="2.300"/><rect x="1433.800" y="697.600" width="5.200" height="9.200" rx="1.500"/>
</svg><div class="abs" style="left:0;top:82px;width:282px;height:230px;background:#161616"></div><div id="ruler"><svg class="abs" width="1042" height="30" viewBox="575 721 1042 30" style="left:0;top:0">
<path d="M576.5,743.500V751" stroke="#c8c8c8" stroke-width="1"/>
<path d="M600.5,736.500V748" stroke="#c8c8c8" stroke-width="1" stroke-dasharray="4.300 2.500"/>
<text x="600" y="731" font-size="9.500" fill="#cacaca" text-anchor="middle" font-family="Liberation Sans,sans-serif">0</text>
<path d="M624.5,743.500V751" stroke="#c8c8c8" stroke-width="1"/>
<path d="M648.5,743.500V751" stroke="#c8c8c8" stroke-width="1"/>
<path d="M672.5,743.500V751" stroke="#c8c8c8" stroke-width="1"/>
<path d="M696.5,743.500V751" stroke="#c8c8c8" stroke-width="1"/>
<path d="M720.5,736.500V748" stroke="#c8c8c8" stroke-width="1" stroke-dasharray="4.300 2.500"/>
<text x="720" y="731" font-size="9.500" fill="#cacaca" text-anchor="middle" font-family="Liberation Sans,sans-serif">1</text>
<path d="M744.5,743.500V751" stroke="#c8c8c8" stroke-width="1"/>
<path d="M768.5,743.500V751" stroke="#c8c8c8" stroke-width="1"/>
<path d="M792.5,743.500V751" stroke="#c8c8c8" stroke-width="1"/>
<path d="M816.5,743.500V751" stroke="#c8c8c8" stroke-width="1"/>
<path d="M840.5,736.500V748" stroke="#c8c8c8" stroke-width="1" stroke-dasharray="4.300 2.500"/>
<text x="840" y="731" font-size="9.500" fill="#cacaca" text-anchor="middle" font-family="Liberation Sans,sans-serif">2</text>
<path d="M864.5,743.500V751" stroke="#c8c8c8" stroke-width="1"/>
<path d="M888.5,743.500V751" stroke="#c8c8c8" stroke-width="1"/>
<path d="M912.5,743.500V751" stroke="#c8c8c8" stroke-width="1"/>
<path d="M936.5,743.500V751" stroke="#c8c8c8" stroke-width="1"/>
<path d="M960.5,736.500V748" stroke="#c8c8c8" stroke-width="1" stroke-dasharray="4.300 2.500"/>
<text x="960" y="731" font-size="9.500" fill="#cacaca" text-anchor="middle" font-family="Liberation Sans,sans-serif">3</text>
<path d="M984.5,743.500V751" stroke="#c8c8c8" stroke-width="1"/>
<path d="M1008.5,743.500V751" stroke="#c8c8c8" stroke-width="1"/>
<path d="M1032.5,743.500V751" stroke="#c8c8c8" stroke-width="1"/>
<path d="M1056.5,743.500V751" stroke="#c8c8c8" stroke-width="1"/>
<path d="M1080.5,736.500V748" stroke="#c8c8c8" stroke-width="1" stroke-dasharray="4.300 2.500"/>
<text x="1080" y="731" font-size="9.500" fill="#cacaca" text-anchor="middle" font-family="Liberation Sans,sans-serif">4</text>
<path d="M1104.5,743.500V751" stroke="#c8c8c8" stroke-width="1"/>
<path d="M1128.5,743.500V751" stroke="#c8c8c8" stroke-width="1"/>
<path d="M1152.5,743.500V751" stroke="#c8c8c8" stroke-width="1"/>
<path d="M1176.5,743.500V751" stroke="#c8c8c8" stroke-width="1"/>
<path d="M1200.5,736.500V748" stroke="#c8c8c8" stroke-width="1" stroke-dasharray="4.300 2.500"/>
<text x="1200" y="731" font-size="9.500" fill="#cacaca" text-anchor="middle" font-family="Liberation Sans,sans-serif">5</text>
<path d="M1224.5,743.500V751" stroke="#c8c8c8" stroke-width="1"/>
<path d="M1248.5,743.500V751" stroke="#c8c8c8" stroke-width="1"/>
<path d="M1272.5,743.500V751" stroke="#c8c8c8" stroke-width="1"/>
<path d="M1296.5,743.500V751" stroke="#c8c8c8" stroke-width="1"/>
<path d="M1320.5,736.500V748" stroke="#c8c8c8" stroke-width="1" stroke-dasharray="4.300 2.500"/>
<text x="1320" y="731" font-size="9.500" fill="#cacaca" text-anchor="middle" font-family="Liberation Sans,sans-serif">6</text>
<path d="M1344.5,743.500V751" stroke="#c8c8c8" stroke-width="1"/>
<path d="M1368.5,743.500V751" stroke="#c8c8c8" stroke-width="1"/>
<path d="M1392.5,743.500V751" stroke="#c8c8c8" stroke-width="1"/>
<path d="M1416.5,743.500V751" stroke="#c8c8c8" stroke-width="1"/>
<path d="M1440.5,736.500V748" stroke="#c8c8c8" stroke-width="1" stroke-dasharray="4.300 2.500"/>
<text x="1440" y="731" font-size="9.500" fill="#cacaca" text-anchor="middle" font-family="Liberation Sans,sans-serif">7</text>
<path d="M1464.5,743.500V751" stroke="#c8c8c8" stroke-width="1"/>
<path d="M1488.5,743.500V751" stroke="#c8c8c8" stroke-width="1"/>
<path d="M1512.5,743.500V751" stroke="#c8c8c8" stroke-width="1"/>
<path d="M1536.5,743.500V751" stroke="#c8c8c8" stroke-width="1"/>
<path d="M1560.5,736.500V748" stroke="#c8c8c8" stroke-width="1" stroke-dasharray="4.300 2.500"/>
<text x="1560" y="731" font-size="9.500" fill="#cacaca" text-anchor="middle" font-family="Liberation Sans,sans-serif">8</text>
<path d="M1584.5,743.500V751" stroke="#c8c8c8" stroke-width="1"/>
<path d="M1608.5,743.500V751" stroke="#c8c8c8" stroke-width="1"/>
</svg></div>
<div class="abs" id="trks" style="left:0;top:1px;width:1324px;height:311px"><div class="abs" style="left:282px;top:111px;width:1042px;height:200px;background:#0f0f0f"></div><div class="trk" style="top:111px"></div>
<div class="lbl" style="left:20px;top:109px">分步</div>
<div class="trk" style="top:137px"></div>
<div class="lbl" style="left:20px;top:135px">显示</div>
<div class="trk" style="top:163px"></div>
<div class="lbl sub en" style="left:30px;top:161px">http://10.122.92.200:9011/package/pc/3dca...</div>
<div class="trk" style="top:189px"></div>
<div class="lbl sub" style="left:30px;top:187px">引线1</div>
<div class="trk" style="top:215px"></div>
<div class="lbl sub" style="left:30px;top:213px">文本1</div>
<div class="trk" style="top:241px"></div>
<div class="lbl" style="left:20px;top:239px">变换</div>
<div class="trk" style="top:267px"></div>
<div class="lbl" style="left:20px;top:265px">轨迹</div>
<div class="trk" style="top:293px"></div>
<div class="lbl" style="left:20px;top:291px">多圈旋转</div>
<i class="tri2" style="left:8.500px;top:146px"></i>
<div class="bar" style="left:306px;top:166px;width:361.5px"></div><i class="dm" style="left:302.8px;top:171px"></i><i class="dm" style="left:662.8px;top:171px"></i>
<div class="bar" style="left:306px;top:192px;width:361.5px"></div><i class="dm" style="left:302.8px;top:197px"></i><i class="dm" style="left:662.8px;top:197px"></i>
<div class="bar" style="left:306px;top:218px;width:361.5px"></div><i class="dm" style="left:302.8px;top:223px"></i><i class="dm" style="left:662.8px;top:223px"></i>
<div class="bar" style="left:306px;top:244px;width:195.5px"></div><i class="dm" style="left:302.8px;top:249px"></i><i class="dm" style="left:496.8px;top:249px"></i>
<div class="abs" style="left:10.500px;top:238px;width:506.500px;height:32px;border:2.400px solid #ee0a10"></div>
<div class="abs" style="left:500px;top:105px;width:2px;height:210px;background:#fff"></div><div class="abs" style="left:498.800px;top:96px;width:4.600px;height:10px;background:#fff;border-radius:1px"></div></div></div>
</div>
</body>
</html>
